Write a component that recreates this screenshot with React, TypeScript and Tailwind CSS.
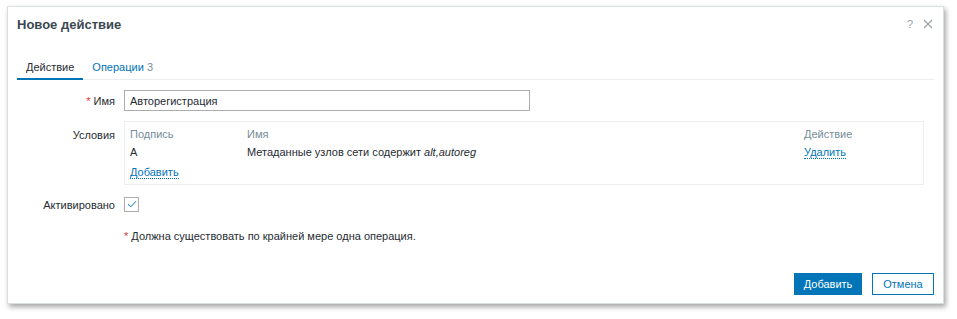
import React from 'react';

const font = { fontFamily: '"Liberation Sans", Arial, sans-serif' };

const App: React.FC = () => {
  return (
    <div className="w-[957px] h-[319px] bg-white pt-[6px] pl-[7px]" style={font}>
      {/* Dialog */}
      <div className="w-[937px] h-[298px] bg-white border border-[#d9dee1] shadow-[2px_3px_5px_rgba(0,0,0,0.35)] flex flex-col text-[11px] leading-[14px] text-[#1f2c33]">
        {/* Header */}
        <div className="flex items-start justify-between pt-[9px] pl-[9px] pr-[10px]">
          <h2 className="text-[13px] leading-[18px] font-bold text-[#3a4850]">Новое действие</h2>
          <div className="flex items-center gap-[10px] pt-[2px] text-[#9aa4a9]">
            <span className="text-[11px] leading-[12px]">?</span>
            <svg width="10" height="10" viewBox="0 0 10 10" className="stroke-[#9aa4a9]" strokeWidth="1.2">
              <path d="M1 1L9 9M9 1L1 9" />
            </svg>
          </div>
        </div>

        {/* Tabs */}
        <div className="mt-[16px] mx-[9px] flex border-b border-[#ebeef0]">
          <div className="px-[9px] pt-[10px] pb-[4px] border-b-2 border-[#0275b8] -mb-px">Действие</div>
          <div className="px-[9px] pt-[10px] pb-[4px] text-[#0275b8]">
            Операции <span className="text-[#768d99]">3</span>
          </div>
        </div>

        {/* Form */}
        <div className="px-[9px] pt-[10px] flex flex-col">
          <div className="flex items-center gap-[9px]">
            <label className="w-[98px] text-right">
              <span className="text-[#e33734]">*</span> Имя
            </label>
            <div className="w-[406px] h-[21px] border border-[#acacac] pl-[5px] flex items-center">Авторегистрация</div>
          </div>

          <div className="flex items-start gap-[9px] mt-[10px]">
            <label className="w-[98px] text-right pt-[7px]">Условия</label>
            <div className="w-[800px] border border-[#ebeef0] px-[5px] pt-[5px] pb-[2px]">
              <div className="grid grid-cols-[117px_1fr_114px] text-[#768d99] pb-[4px]">
                <span>Подпись</span>
                <span>Имя</span>
                <span>Действие</span>
              </div>
              <div className="grid grid-cols-[117px_1fr_114px] pb-[6px]">
                <span>A</span>
                <span>
                  Метаданные узлов сети содержит <i>alt,autoreg</i>
                </span>
                <span>
                  <span className="text-[#0275b8] border-b border-dotted border-[#0275b8]">Удалить</span>
                </span>
              </div>
              <div className="pb-[3px]">
                <span className="text-[#0275b8] border-b border-dotted border-[#0275b8]">Добавить</span>
              </div>
            </div>
          </div>

          <div className="flex items-center gap-[9px] mt-[11px]">
            <label className="w-[98px] text-right pt-[2px]">Активировано</label>
            <div className="w-[15px] h-[15px] border border-[#acacac] flex items-center justify-center">
              <svg width="10" height="8" viewBox="0 0 10 8" fill="none" stroke="#0275b8" strokeWidth="1">
                <path d="M1 4.2L3.8 6.8L9 1.2" />
              </svg>
            </div>
          </div>

          <div className="mt-[17px] pl-[107px]">
            <span className="text-[#e33734]">*</span> Должна существовать по крайней мере одна операция.
          </div>
        </div>

        {/* Footer */}
        <div className="mt-auto flex justify-end gap-[10px] pr-[9px] pb-[8px]">
          <button className="w-[68px] h-[22px] bg-[#0275b8] text-white text-[11px]">Добавить</button>
          <button className="w-[62px] h-[22px] bg-white border border-[#0275b8] text-[#0275b8] text-[11px]">Отмена</button>
        </div>
      </div>
    </div>
  );
};

export default App;
